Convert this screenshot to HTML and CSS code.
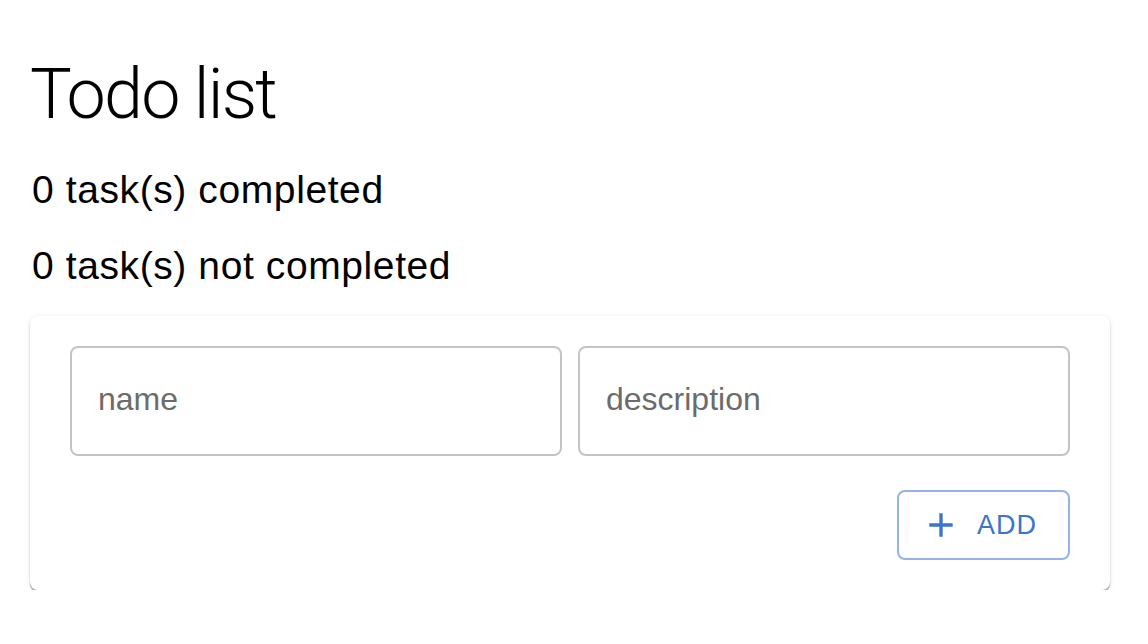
FILE: index.html
```html
<!DOCTYPE html>
<html lang="en">
<head>
<meta charset="utf-8">
<title>Todo list</title>
<link rel="stylesheet" href="styles.css">
</head>
<body>
<main class="page">
  <h1 class="title">Todo list</h1>
  <p class="stat">0 task(s) completed</p>
  <p class="stat stat-second">0 task(s) not completed</p>
  <section class="card">
    <div class="fields">
      <input class="field" type="text" placeholder="name">
      <input class="field" type="text" placeholder="description">
    </div>
    <div class="actions">
      <button class="add-btn" type="button">
        <svg class="add-icon" viewBox="0 0 24 24" aria-hidden="true"><path d="M19 13h-6v6h-2v-6H5v-2h6V5h2v6h6v2z"/></svg>
        <span>ADD</span>
      </button>
    </div>
  </section>
</main>
</body>
</html>
```

FILE: styles.css
```css
html, body {
  margin: 0;
  padding: 0;
  background: #ffffff;
}

body {
  font-family: "Liberation Sans", Arial, Helvetica, sans-serif;
  color: #000;
}

.page {
  padding: 54px 38px 0 30px;
}

.title {
  margin: 0;
  font-family: Roboto, "Liberation Sans", sans-serif;
  font-weight: 300;
  font-size: 70px;
  line-height: 80px;
  letter-spacing: -1.8px;
}

.stat {
  margin: 34px 0 0 2px;
  font-size: 39px;
  line-height: 44px;
  letter-spacing: 0.6px;
}

.stat-second {
  margin-top: 32px;
}

.card {
  margin-top: 28px;
  background: #fff;
  border-radius: 8px;
  padding: 30px 40px 30px 40px;
  box-shadow: 0 2px 1px 0 rgba(0,0,0,0.28), 0 1px 2px 0 rgba(0,0,0,0.12), 0 1px 6px 0 rgba(0,0,0,0.08);
}

.fields {
  display: flex;
  gap: 16px;
}

.field {
  flex: 1;
  min-width: 0;
  height: 110px;
  box-sizing: border-box;
  border: 2px solid #c4c4c4;
  border-radius: 8px;
  padding: 0 26px 4px;
  font-family: "Liberation Sans", Arial, sans-serif;
  font-size: 32px;
  color: #222;
  background: #fff;
  outline: none;
}

.field::placeholder {
  color: #6b6b6b;
  opacity: 1;
}

.actions {
  display: flex;
  justify-content: flex-end;
  margin-top: 34px;
}

.add-btn {
  display: flex;
  align-items: center;
  gap: 16px;
  height: 70px;
  width: 173px;
  box-sizing: border-box;
  padding: 0 0 0 22px;
  border: 2px solid #93b4e8;
  border-radius: 8px;
  background: #fff;
  color: #3b74cc;
  font-family: "Liberation Sans", Arial, sans-serif;
  font-size: 27px;
  letter-spacing: 1px;
  cursor: pointer;
}

.add-icon {
  width: 40px;
  height: 40px;
  fill: #3b74cc;
  flex: none;
}
```
